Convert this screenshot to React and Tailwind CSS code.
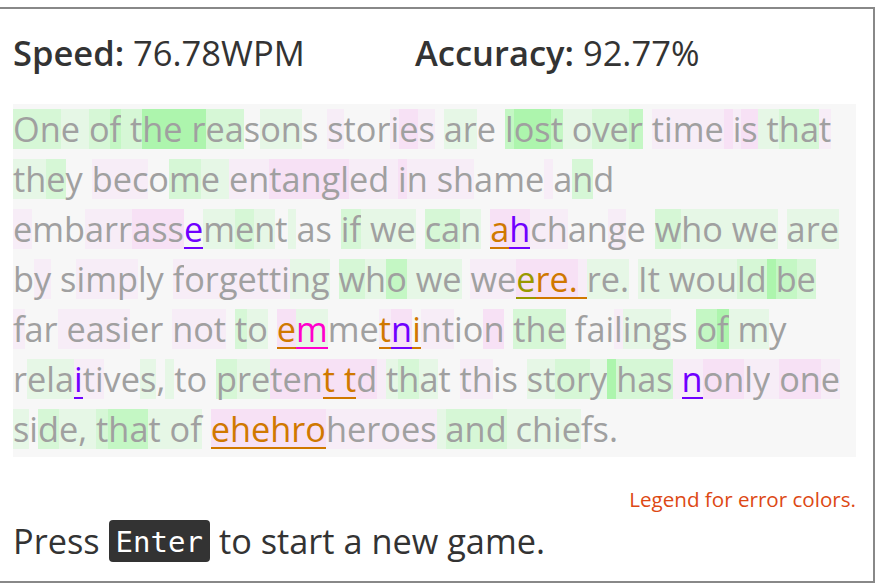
import React from "react";

const BG = {
  ".": "",
  g: "bg-[#e6f7e6]",
  G: "bg-[#d6f7d6]",
  H: "bg-[#c4f7c4]",
  I: "bg-[#adf5ad]",
  p: "bg-[#f7edf7]",
  P: "bg-[#f7e1f5]",
};

const ERR = {
  o: "text-[#d07800] border-b-2 border-[#d07800]",
  p: "text-[#7000ff] border-b-2 border-[#7000ff]",
  m: "text-[#ff00cc] border-b-2 border-[#ff00cc]",
  y: "text-[#999900] border-b-2 border-[#999900]",
};

const LINES = [
  [
    ["One of the reasons stories are lost over time is that",
      "GGg" + "g" + "GH" + "G" + "GII" + "I" + "IGG.gg." + "." + "p...pPp" + "." + "gg." + "." + "HIIH" + "g" + "gGGH" + "." + "pppp" + "P" + "pP" + "g" + "gGGp", "."],
  ],
  [
    ["they become entangled in shame and",
      "ggG." + "." + "ppp.Gg" + "g" + "ppPPPPPpp" + "p" + "Pp" + "p" + "pp..." + "p" + ".G.", "."],
  ],
  [
    ["embarrass", "p..pppPPP", "."],
    ["e", ".", "p"],
    ["ment as if we can ", "gGg." + "g" + ".." + "." + "GG" + "g" + "gg" + "." + "GGg" + ".", "."],
    ["a", "P", "o"],
    ["h", "P", "p"],
    ["change who we are", "pp..p." + "." + "Ggg" + "g" + "gg" + "." + "ggg", "."],
  ],
  [
    ["by simply forgetting who we we", ".p" + "." + ".ppp.." + "." + "ppppppppgg" + "." + "GgH" + "g" + "gg" + "." + "pp", "."],
    ["e", "P", "y"],
    ["re. ", "PPPp", "o"],
    ["re. It would be", "ggg" + "." + "gg" + "g" + "gggGG" + "I" + "HG", "."],
  ],
  [
    ["far easier not to ", "p.." + "p" + "pppp.." + "." + "ppp" + "." + "Gg" + ".", "."],
    ["e", "P", "o"],
    ["m", "g", "m"],
    ["me", "..", "."],
    ["t", "p", "o"],
    ["n", "P", "p"],
    ["i", ".", "o"],
    ["ntion the failings of my", "pp..P" + "." + "GGG" + "." + "...pggg." + "." + "HI" + "g" + "g.", "."],
  ],
  [
    ["rela", ".ggg", "."],
    ["i", "p", "p"],
    ["tives, to preten", "pp..g.g...GggPPP", "."],
    ["t t", "PPP", "o"],
    ["d that this story has ", "PpgGg..pp...ggGGgIGGGp", "."],
    ["n", "p", "p"],
    ["only one", "PPpppPPp", "."],
  ],
  [
    ["side, that of ", "g.Ggg" + "g" + "GHHg" + "g" + "gg" + ".", "."],
    ["ehehro", "PPPPPP", "o"],
    ["heroes and chiefs.", "pppppp" + "g" + "GGG" + "g" + "gggg...", "."],
  ],
];

function Line({ segs }) {
  const chars = [];
  segs.forEach(([text, hl, err], si) => {
    for (let i = 0; i < text.length; i++) {
      const h = BG[hl[i] || "."] || "";
      const e = err !== "." ? ERR[err] : "";
      chars.push(
        <span
          key={si + "-" + i}
          className={`inline-block h-[40px] leading-[40px] whitespace-pre ${h} ${e}`}
        >
          {text[i]}
        </span>
      );
    }
  });
  return <div className="flex h-[50px] items-center">{chars}</div>;
}

export default function App() {
  return (
    <div
      className="w-[875px] h-[576px] mt-[7px] border-t-2 border-b-2 border-r-2 border-[#888888] bg-white overflow-hidden"
      style={{ fontFamily: '"Open Sans", "Noto Sans", sans-serif' }}
    >
      <div className="pl-[13px] pr-[17px]">
        <div className="h-[95px] pt-[24px] flex text-[34.5px] leading-[40px] text-[#333333]">
          <div className="w-[402px] whitespace-nowrap">
            <span className="font-semibold">Speed:</span> 76.78WPM
          </div>
          <div className="whitespace-nowrap">
            <span className="font-semibold">Accuracy:</span> 92.77%
          </div>
        </div>
        <div className="bg-[#f7f7f7] h-[353px] text-[34.3px] text-[#a0a0a0]">
          {LINES.map((segs, i) => (
            <Line key={i} segs={segs} />
          ))}
        </div>
        <div className="mt-[30px] h-[24px] leading-[24px] text-right text-[20.6px] text-[#dd4814]">
          Legend for error colors.
        </div>
        <div className="mt-[9px] flex items-center h-[42px] text-[34.3px] text-[#333333] whitespace-nowrap">
          <span>Press</span>
          <span
            className="mx-[9px] h-[42px] px-[7px] rounded-[4px] bg-[#333333] text-white text-[29px] leading-[44px]"
            style={{ fontFamily: '"DejaVu Sans Mono", monospace' }}
          >
            Enter
          </span>
          <span>to start a new game.</span>
        </div>
      </div>
    </div>
  );
}
